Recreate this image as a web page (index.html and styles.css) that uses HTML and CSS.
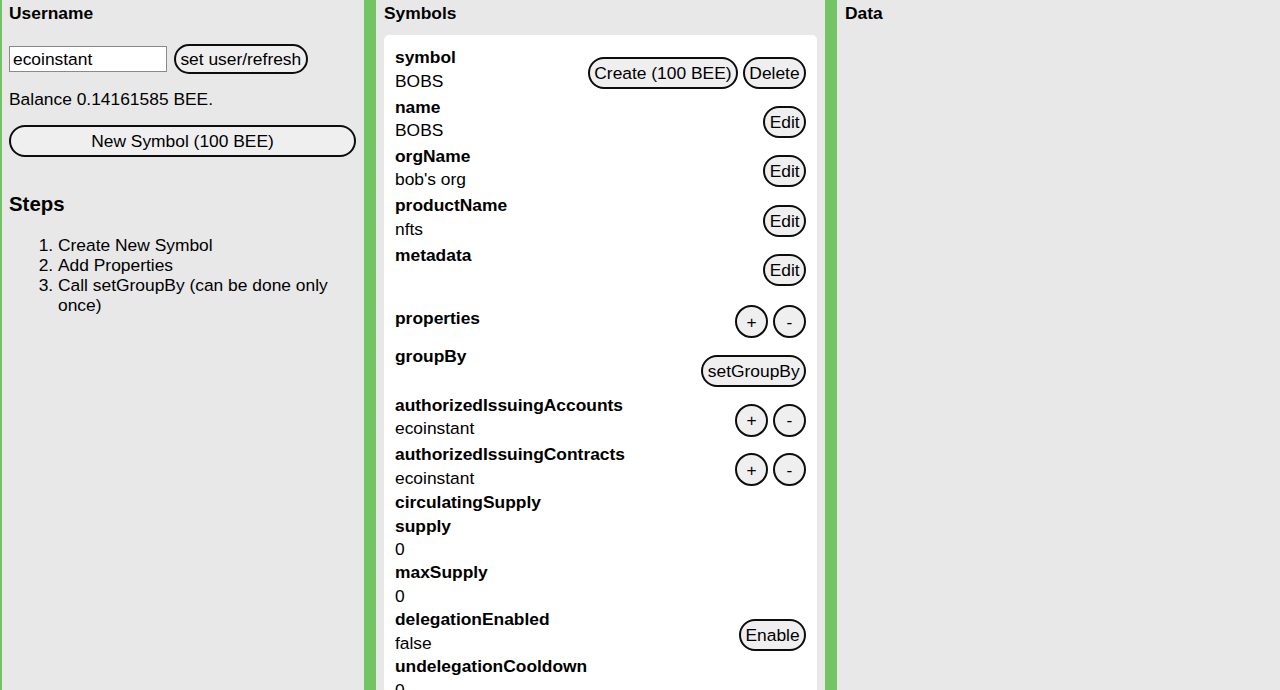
FILE: index.html
```html
<!DOCTYPE html>
<html lang="en">
<head>
    <meta charset="UTF-8">
    <title>NFT Symbols</title>
    <link rel="stylesheet" href="styles.css">
</head>
<body>
    <div class="layout">
        <div class="panel panel-left">
            <h2 class="panel-title">Username</h2>
            <div class="user-form">
                <input type="text" class="user-input" value="ecoinstant">
                <button class="btn btn-tight">set user/refresh</button>
            </div>
            <p class="balance">Balance 0.14161585 BEE.</p>
            <button class="btn btn-wide">New Symbol (100 BEE)</button>

            <h3 class="steps-title">Steps</h3>
            <ol class="steps">
                <li>Create New Symbol</li>
                <li>Add Properties</li>
                <li>Call setGroupBy (can be done only once)</li>
            </ol>
        </div>

        <div class="panel">
            <h2 class="panel-title">Symbols</h2>
            <div class="card">
                <div class="field has-btn">
                    <div>
                        <div class="field-key">symbol</div>
                        <div class="field-value">BOBS</div>
                    </div>
                    <div class="field-actions">
                        <button class="btn">Create (100 BEE)</button>
                        <button class="btn">Delete</button>
                    </div>
                </div>
                <div class="field has-btn">
                    <div>
                        <div class="field-key">name</div>
                        <div class="field-value">BOBS</div>
                    </div>
                    <div class="field-actions"><button class="btn">Edit</button></div>
                </div>
                <div class="field has-btn">
                    <div>
                        <div class="field-key">orgName</div>
                        <div class="field-value">bob's org</div>
                    </div>
                    <div class="field-actions"><button class="btn">Edit</button></div>
                </div>
                <div class="field has-btn">
                    <div>
                        <div class="field-key">productName</div>
                        <div class="field-value">nfts</div>
                    </div>
                    <div class="field-actions"><button class="btn">Edit</button></div>
                </div>
                <div class="field has-btn field-meta">
                    <div>
                        <div class="field-key">metadata</div>
                        <div class="field-value">&nbsp;</div>
                    </div>
                    <div class="field-actions"><button class="btn">Edit</button></div>
                </div>
                <div class="field has-btn field-props">
                    <div>
                        <div class="field-key">properties</div>
                    </div>
                    <div class="field-actions">
                        <button class="btn btn-round">+</button>
                        <button class="btn btn-round">-</button>
                    </div>
                </div>
                <div class="field has-btn">
                    <div>
                        <div class="field-key">groupBy</div>
                        <div class="field-value">&nbsp;</div>
                    </div>
                    <div class="field-actions"><button class="btn">setGroupBy</button></div>
                </div>
                <div class="field has-btn">
                    <div>
                        <div class="field-key">authorizedIssuingAccounts</div>
                        <div class="field-value">ecoinstant</div>
                    </div>
                    <div class="field-actions">
                        <button class="btn btn-round">+</button>
                        <button class="btn btn-round">-</button>
                    </div>
                </div>
                <div class="field has-btn">
                    <div>
                        <div class="field-key">authorizedIssuingContracts</div>
                        <div class="field-value">ecoinstant</div>
                    </div>
                    <div class="field-actions">
                        <button class="btn btn-round">+</button>
                        <button class="btn btn-round">-</button>
                    </div>
                </div>
                <div class="field">
                    <div>
                        <div class="field-key">circulatingSupply</div>
                    </div>
                </div>
                <div class="field">
                    <div>
                        <div class="field-key">supply</div>
                        <div class="field-value">0</div>
                    </div>
                </div>
                <div class="field">
                    <div>
                        <div class="field-key">maxSupply</div>
                        <div class="field-value">0</div>
                    </div>
                </div>
                <div class="field has-btn field-enable">
                    <div>
                        <div class="field-key">delegationEnabled</div>
                        <div class="field-value">false</div>
                    </div>
                    <div class="field-actions"><button class="btn">Enable</button></div>
                </div>
                <div class="field">
                    <div>
                        <div class="field-key">undelegationCooldown</div>
                        <div class="field-value">0</div>
                    </div>
                </div>
            </div>
        </div>

        <div class="panel">
            <h2 class="panel-title">Data</h2>
        </div>
    </div>
</body>
</html>
```

FILE: styles.css
```css
* {
    box-sizing: border-box;
}

body {
    margin: 0;
    background: #72c464;
    font-family: "Liberation Sans", Arial, sans-serif;
    font-size: 17.4px;
    color: #000;
}

.layout {
    display: grid;
    grid-template-columns: 362px 449px 1fr;
    column-gap: 12px;
    padding-left: 2px;
    min-height: 100vh;
}

.panel {
    background: #e8e8e8;
    padding: 3px 8px 20px;
}

.panel-left {
    padding-left: 7px;
}

.panel-title {
    margin: 0;
    font-size: 17.4px;
    font-weight: bold;
    line-height: 20px;
}

/* user */
.user-form {
    display: flex;
    align-items: center;
    gap: 7px;
    margin-top: 21px;
}

.user-input {
    width: 158px;
    height: 26px;
    padding: 1px 3px;
    border: 1px solid #8a8a8a;
    background: #fff;
    font-family: inherit;
    font-size: 17.4px;
    color: #000;
}

.balance {
    margin: 15px 0 0;
    line-height: 20px;
}

.btn {
    font-family: inherit;
    font-size: 17.4px;
    line-height: 20px;
    color: #000;
    background: #efefef;
    border: 2px solid #0d0d0d;
    border-radius: 999px;
    padding: 4px 4.4px;
    cursor: pointer;
    white-space: nowrap;
}

.btn-tight {
    padding-top: 3px;
    padding-bottom: 3px;
}

.btn-wide {
    display: block;
    width: 100%;
    margin-top: 16px;
}

.btn-round {
    width: 33px;
    height: 33px;
    padding: 0;
    border-radius: 50%;
}

.steps-title {
    margin: 36px 0 0;
    font-size: 20.4px;
    line-height: 23.4px;
}

.steps {
    margin: 19px 0 0;
    padding-left: 49px;
    line-height: 20px;
}

/* symbol card */
.card {
    margin-top: 12px;
    background: #fff;
    border-radius: 5px;
    padding: 10px 11px 12px;
}

.field {
    display: flex;
    justify-content: space-between;
    align-items: center;
    line-height: 23.4px;
}

.field.has-btn {
    padding: 1.25px 0;
}

.field-key {
    font-weight: bold;
}

.field-actions {
    display: flex;
    gap: 5px;
    margin-top: 6px;
}

.field-meta {
    padding-bottom: 7.5px !important;
}

.field-props {
    padding-bottom: 5.25px !important;
}

.field-enable {
    padding: 0 !important;
}
```
